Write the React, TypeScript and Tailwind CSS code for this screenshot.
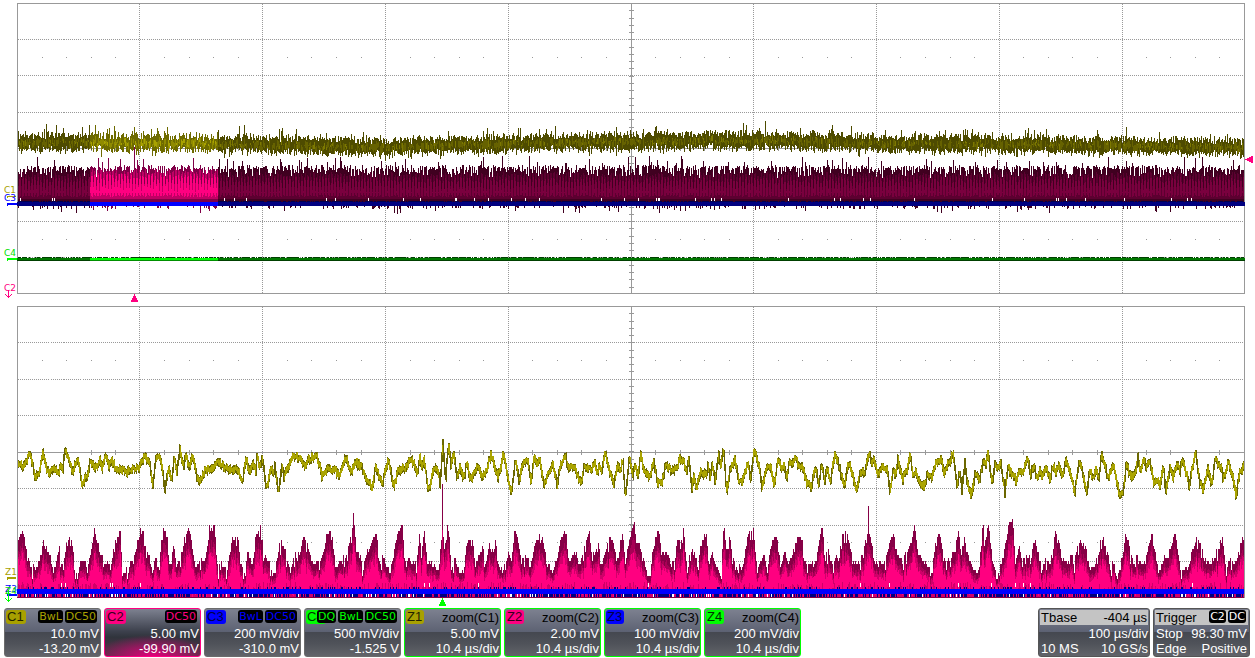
import React from "react";

type Band = { color: string; d: string };

const LEFT = 17;
const RIGHT = 1244;
const ZOOM_FROM = 90;
const ZOOM_TO = 218;
const VERTICALS = [139, 262, 385, 508, 753, 876, 999, 1122];

function makeRandom(seed: number) {
  let s = seed;
  return () => {
    s = (s * 1664525 + 1013904223) >>> 0;
    return s / 4294967296;
  };
}

/** Collects one-pixel columns by colour so each colour becomes a single path. */
class Columns {
  private parts = new Map<string, string[]>();
  add(color: string, x: number, y1: number, y2: number, w = 1) {
    const a = Math.round(y1);
    const b = Math.round(y2);
    if (b <= a) return;
    if (!this.parts.has(color)) this.parts.set(color, []);
    this.parts.get(color)!.push(`M${x} ${a}h${w}V${b}h-${w}z`);
  }
  bands(): Band[] {
    return [...this.parts].map(([color, p]) => ({ color, d: p.join("") }));
  }
}

function parse(offset: number, text: string): [number, number][] {
  return text
    .trim()
    .split(/\s+/)
    .map((p) => {
      const [x, y] = p.split(",").map(Number);
      return [offset + x / 3, 430 + y / 3];
    });
}

function sampler(points: [number, number][]) {
  let i = 0;
  return (x: number) => {
    if (x < points[i][0]) i = 0;
    while (i < points.length - 2 && points[i + 1][0] < x) i++;
    const [x0, y0] = points[i];
    const [x1, y1] = points[i + 1];
    const t = Math.max(0, Math.min(1, (x - x0) / (x1 - x0 || 1)));
    return y0 + (y1 - y0) * t;
  };
}

const Z1_POINTS = [
  ...parse(0, "52,105 75,105 90,70 97,98 107,145 120,120 130,65 140,120 150,130 165,115 175,130 185,100 188,125 195,55 205,80 218,130 232,82 247,160 262,140 270,95 290,115 300,90 305,115 318,75 327,110 335,90 348,115 380,125 415,115 425,90 437,75 450,110 458,170 468,85 478,85 487,110 495,180 507,110 515,150 523,85 531,130 540,55 550,105 560,75 568,110 578,75 592,145 605,148 615,120 628,120 640,115 653,95 665,105 680,115 700,115 715,125 728,150 738,90 750,125 760,100 768,130 770,80 780,110 788,80 800,180 812,115 820,130 825,105 835,185 845,110 853,145 865,110 875,90 882,75 898,85 915,110 925,90 939,80 950,72 966,135 984,120 1005,120 1020,135 1038,80 1053,130 1065,95 1086,110 1101,150 1116,170 1128,110"),
  ...parse(380, "0,145 8,160 25,85 42,170 55,120 75,115 90,85 105,105 113,135 119,75 127,115 133,85 145,180 155,145 168,105 175,120 181,170 188,35 197,150 206,40 213,105 223,70 231,145 240,105 250,150 262,95 270,150 285,130 295,100 305,140 318,125 333,70 345,115 355,140 370,75 380,120 394,190 406,85 418,150 425,115 443,80 452,155 463,85 472,100 480,90 492,170 505,130 518,100 532,165 542,100 558,75 565,120 580,105 603,160 613,105 630,120 645,100 652,130 658,110 665,125 674,65 682,95 695,140 702,165 713,100 722,125 728,85 737,200 748,80 758,135 765,105 775,135 782,65 790,115 808,140 822,95 833,160 845,160 858,100 870,120 890,115"),
  ...parse(670, "30,85 40,95 50,125 57,90 66,180 72,140 80,170 92,125 108,130 115,105 120,150 127,95 135,155 147,75 152,110 160,50 170,180 180,120 195,85 205,145 215,155 225,130 235,100 243,145 252,65 265,95 277,175 287,120 300,105 312,165 325,85 335,115 342,100 350,145 358,100 380,85 387,110 395,100 410,155 423,175 437,115 447,165 455,100 465,150 472,105 482,155 494,75 505,95 522,170 535,95 545,125 560,185 570,130 585,125 598,65 605,105 613,90 622,135 640,105 652,120 661,180 670,120 675,135 685,85 697,150 712,120 721,70 730,140 738,125 745,150 763,170 772,135 785,145 795,105 813,85 823,130 838,95 849,70 862,165 868,120 876,180"),
  ...parse(955, "30,95 36,145 49,200 60,135 75,145 85,90 92,110 100,60 110,160 120,105 128,120 137,95 150,185 160,110 185,155 195,120 205,125 218,90 228,130 237,105 247,145 255,115 262,145 272,110 285,145 295,105 303,130 313,100 322,140 333,90 345,120 360,185 372,100 382,120 395,185 405,125 415,140 425,115 432,150 440,65 450,105 458,145 465,130 475,105 493,195 505,190 514,95 525,135 535,140 543,125 550,75 555,120 567,90 575,115 586,95 597,160 610,150 615,165 625,105 633,185 645,110 655,145 665,105 675,120 683,90 695,135 703,170 712,115 723,70 733,150 743,180 752,145 760,115 770,160 782,85 798,115 805,145 820,95 835,145 843,195 855,130 868,100"),
];

const Z2_POINTS = [
  ...parse(0, "52,340 62,310 75,320 82,390 90,410 105,415 118,380 128,330 140,365 150,375 157,420 165,410 178,340 182,410 190,390 198,350 206,320 217,350 225,420 232,435 240,400 250,385 260,420 270,370 281,310 290,330 300,375 315,400 330,395 345,350 361,300 365,430 380,410 400,395 410,340 418,300 430,300 437,370 447,380 457,440 465,380 475,420 487,285 500,320 508,420 520,345 530,410 540,390 550,340 565,290 575,350 585,410 600,395 615,390 627,300 643,285 650,410 665,400 680,420 690,360 697,320 712,320 720,390 735,430 742,360 755,410 765,330 781,280 790,370 805,390 820,440 830,380 844,320 855,360 870,430 880,380 898,365 912,315 924,360 942,405 960,390 981,315 993,300 1005,405 1035,390 1053,315 1059,258 1068,345 1086,405 1110,345 1128,306 1136,390"),
  ...parse(380, "0,400 8,375 15,410 30,420 40,370 52,310 66,285 72,385 90,395 108,410 117,310 124,360 132,295 140,400 155,400 175,420 183,320 188,310 193,370 200,275 208,320 213,420 222,385 235,420 250,430 257,350 265,330 277,320 285,410 297,380 308,350 315,410 327,340 345,330 355,410 372,400 385,370 392,400 403,300 415,340 422,385 440,380 450,410 465,340 480,310 490,350 500,400 515,420 530,390 540,330 557,300 565,400 583,370 600,410 610,350 628,305 635,390 655,330 660,420 675,370 690,310 702,350 710,400 727,310 735,400 748,320 760,275 770,330 785,370 800,430 810,440 820,325 835,300 845,370 860,375 875,400 885,380 892,320"),
  ...parse(670, "30,355 40,285 48,400 60,370 75,375 85,420 90,340 108,310 115,400 125,370 135,400 152,450 160,285 170,370 178,310 187,390 200,410 215,410 222,385 232,310 250,305 258,390 270,400 282,370 290,435 302,340 318,320 330,400 345,370 355,400 365,380 377,330 395,320 400,400 420,400 435,410 445,345 455,285 465,370 475,365 485,410 495,380 505,400 515,310 530,300 540,360 550,400 570,400 582,340 595,300 600,320 610,390 640,400 655,350 668,305 680,370 690,385 705,375 722,340 733,285 740,350 755,385 770,400 785,430 795,340 808,310 820,390 835,395 850,370 865,300 872,380 882,320 890,370"),
  ...parse(955, "43,390 55,415 70,430 82,275 90,330 100,275 108,370 115,410 130,420 145,370 157,285 172,275 180,390 192,350 200,400 210,370 220,380 238,330 248,370 260,420 272,385 285,400 292,345 301,300 310,330 320,390 335,400 350,370 357,420 365,345 382,330 395,370 403,420 415,410 430,370 440,320 455,350 465,420 475,400 485,430 497,410 505,350 514,285 522,350 535,400 548,370 555,400 570,400 586,310 597,350 610,430 620,400 635,370 647,360 659,300 665,350 675,410 687,430 700,410 712,360 728,320 740,370 750,390 765,400 780,380 790,350 803,320 812,420 825,380 837,410 850,360 857,330 868,320"),
];

function buildAcquisition(): Band[] {
  const r = makeRandom(41);
  const c = new Columns();
  const drift = sampler([[17, 142], [90, 142], [220, 143], [300, 145], [390, 147], [460, 144], [560, 142], [700, 140], [790, 140], [880, 143], [1000, 144], [1100, 145], [1244, 147]]);
  for (let x = LEFT + 1; x < RIGHT; x++) {
    const lit = x >= ZOOM_FROM && x < ZOOM_TO;
    const mid = drift(x) + (r() - 0.5) * 3;
    const top = mid - 3 - r() * 7 - (r() > 0.92 ? 3 + r() * 6 : 0);
    const bottom = mid + 4 + r() * 7 + (r() > 0.94 ? 3 : 0);
    c.add(lit ? "#6e6b00" : "#4e4b00", x, top, bottom);
    if (r() > 0.3) c.add(lit ? "#8f8a00" : "#666200", x, mid - 5 + r() * 7, mid + r() * 7);
    if (r() > 0.65) c.add(lit ? "#a8a200" : "#7c7800", x, mid - 4 + r() * 6, mid + r() * 5);

    const ridge = r() > 0.35 ? 165 + r() * 5 : 169 + r() * 9;
    const peak = r() > 0.94 ? 156 + r() * 7 : ridge;
    c.add(lit ? "#800048" : "#400020", x, peak, 202);
    const stripe = x % 3 === 0;
    const start = (stripe ? 187 : 175) - (lit ? 3 : 0);
    c.add(lit ? "#c00064" : "#5c0030", x, start - 3 + r() * 5, 199);
    c.add(lit ? "#ff0080" : "#7a003e", x, start + 2 + r() * 6, stripe ? 193 : 195 + r() * 2);
    if (r() > 0.96) c.add("#ffffff", x, 198, 201);
    if (r() > 0.77) c.add(lit ? "#800048" : "#400020", x, 204, 207 + r() * (r() > 0.85 ? 6 : 2));
    if (r() > 0.2) c.add("#000050", x, 201, 203);
    if (r() > 0.3) c.add("#004000", x, 257, 258);
  }
  c.add("#800048", 134, 147, 175);
  c.add("#6e6b00", 134, 127, 140);
  c.add("#400020", 397, 205, 214);
  c.add("#400020", 563, 205, 213);
  return c.bands();
}

function buildZoomPink(): Band[] {
  const r = makeRandom(97);
  const c = new Columns();
  const env = sampler(Z2_POINTS);
  for (let x = LEFT + 1; x < RIGHT; x++) {
    const jitter = r() > 0.7 ? (r() - 0.3) * 18 : (r() - 0.5) * 5;
    const top = Math.min(579, Math.round((env(x) + jitter) / 3) * 3);
    const height = 597 - top;
    c.add("#860046", x, top, 598);
    c.add("#a80055", x, top + height * (0.17 + r() * 0.1), 598);
    c.add("#d0006a", x, top + height * (0.26 + r() * 0.12), 598);
    c.add("#ff0080", x, top + height * (0.33 + r() * 0.17), 582 + r() * 16);
  }
  c.add("#860046", 442, 484, 560);
  c.add("#d0006a", 442, 530, 575);
  c.add("#860046", 868, 506, 540);
  return c.bands();
}

function buildZoomBase(): Band[] {
  const r = makeRandom(12);
  const c = new Columns();
  for (let x = LEFT + 1; x < RIGHT; x++) {
    const n = r();
    if (n > 0.5) c.add("#000080", x, 594, 597);
    else if (n > 0.42) c.add("#ffffff", x, 594, 597);
    if (r() > 0.82) c.add("#000080", x, 587, 589);
    if (r() > 0.985) c.add("#ffffff", x, 583, 587);
  }
  c.add("#860046", LEFT, 597, 598, RIGHT - LEFT);
  c.add("#0000ff", LEFT, 589, 594, RIGHT - LEFT);
  return c.bands();
}

function buildZoomYellow(): Band[] {
  const r = makeRandom(5);
  const c = new Columns();
  const y = sampler(Z1_POINTS);
  let prev = y(LEFT);
  for (let x = LEFT + 1; x < RIGHT; x++) {
    const next = y(x + 1) + (r() - 0.5) * 5;
    const lo = Math.min(prev, next);
    const hi = Math.max(prev, next);
    c.add("#6b6700", x, lo - 2 - r() * 2, hi + 2 + r() * 3);
    if (hi - lo < 7) c.add("#aaa400", x, lo - 1 - r() * 2, hi + 1 + r() * 2);
    prev = next;
  }
  c.add("#6b6700", 442, 439, 462, 2);
  return c.bands();
}

function Trace({ bands }: { bands: Band[] }) {
  return (
    <>
      {bands.map((b) => (
        <path key={b.color} d={b.d} fill={b.color} />
      ))}
    </>
  );
}

function Graticule({ top, lines }: { top: number; lines: number[] }) {
  const bottom = top + 290 + (top > 300 ? 1 : 0);
  const middle = top + (top > 300 ? 146 : 145);
  const subs = Array.from({ length: 49 }, (_, i) => i + 1);
  const minor = Array.from({ length: 39 }, (_, i) => i + 1);
  return (
    <g stroke="#999999" strokeWidth="1" fill="none" transform="translate(.5 .5)">
      <rect x={LEFT} y={top} width={RIGHT - LEFT} height={bottom - top} />
      {lines.map((y) => (
        <path key={y} d={`M${LEFT} ${y}H${RIGHT}`} strokeDasharray="1 1" />
      ))}
      {VERTICALS.map((x) => (
        <path key={x} d={`M${x} ${top}V${bottom}`} strokeDasharray="1 1" />
      ))}
      <path d={`M631 ${top}V${bottom}M${LEFT} ${middle}H${RIGHT}`} />
      <path d={minor.map((i) => `M628.5 ${top + Math.round(i * 7.27)}h5`).join("")} />
      <path
        d={subs
          .filter((i) => i % 5)
          .map((i) => {
            const x = LEFT + Math.round(i * 24.54);
            return `M${x} ${middle - 2.5}v5M${x - 0.5} ${top + 54}h1M${x - 0.5} ${top + 236}h1`;
          })
          .join("")}
      />
    </g>
  );
}

function Marker({ x, y, color, children }: { x: number; y: number; color: string; children: string }) {
  return (
    <text x={x} y={y} fill={color} fontSize="9" fontFamily="DejaVu Sans, sans-serif">
      {children}
    </text>
  );
}

const acquisition = buildAcquisition();
const zoomPink = buildZoomPink();
const zoomBase = buildZoomBase();
const zoomYellow = buildZoomYellow();

function AcquisitionPlot() {
  return (
    <svg viewBox="0 0 1255 303" className="block h-auto w-full" shapeRendering="crispEdges" role="img" aria-label="Channels C1 to C4">
      <Graticule top={3} lines={[39, 75, 112, 184, 221, 257]} />
      <Trace bands={acquisition} />
      <path d="M17 202H1245V206H17z" fill="#000080" />
      <path d="M90 202H218V206H90z" fill="#0000ff" />
      <path d="M17 258H1245V261H17z" fill="#004000" />
      <path d="M17 258H1245V260H17z" fill="#007800" />
      <path d="M90 258H218V261H90z" fill="#009000" />
      <path d="M90 258H218V260H90z" fill="#00ff00" />
      <Marker x={4} y={193} color="#a8a000">C1</Marker>
      <path d="M7 196h9v1h-8v1h-1z" fill="#a8a000" />
      <Marker x={4} y={201} color="#0000ff">C3</Marker>
      <path d="M7 203h10v2h-9v1h-1z" fill="#0000ff" />
      <Marker x={4} y={256} color="#00e000">C4</Marker>
      <path d="M7 258h10v2h-9v1h-1z" fill="#00ff00" />
      <Marker x={4} y={291} color="#ff0080">C2</Marker>
      <path d="M8 290h1v6h1v-1h1v-1h1v1h-1v1h-1v1h-1v1h-1v-1h-1v-1h-1v-1h-1v-1h1v1h1v1h1z" fill="#ff0080" />
      <path d="M134 294h1v2h1v2h1v2h1v2h-7v-2h1v-2h1v-2h1z" fill="#ff0080" />
      <path d="M1245 159h2v-1h2v-1h2v-1h2v7h-2v-1h-2v-1h-2v-1h-2z" fill="#ff0080" />
    </svg>
  );
}

function ZoomPlot() {
  return (
    <svg viewBox="0 303 1255 303" className="block h-auto w-full" shapeRendering="crispEdges" role="img" aria-label="Zooms Z1 to Z4">
      <Graticule top={306} lines={[342, 379, 415, 488, 525, 561]} />
      <Trace bands={zoomPink} />
      <Trace bands={zoomBase} />
      <Trace bands={zoomYellow} />
      <Marker x={5} y={575} color="#a8a000">Z1</Marker>
      <path d="M7 577h9v2h-8v1h-1z" fill="#a8a000" />
      <Marker x={5} y={592} color="#0000ff">Z3</Marker>
      <Marker x={5} y={594} color="#00e000">Z4</Marker>
      <path d="M7 594h10v2h-10z" fill="#0000ff" />
      <path d="M8 590h1v10h1v-1h1v-1h1v1h-1v1h-1v1h-1v1h-1v-1h-1v-1h-1v-1h-1v-1h1v1h1v1h1z" fill="#00ff00" />
      <path d="M442 598h1v2h1v2h1v2h1v2h-7v-2h1v-2h1v-2h1z" fill="#00ff00" />
    </svg>
  );
}

function Tags({ items, color }: { items: string[]; color: string }) {
  return (
    <span className={`relative flex gap-0.5 pr-0.5 font-['DejaVu_Sans',sans-serif] text-[11px] leading-[13px] ${color}`}>
      {items.map((t) => (
        <span key={t} className="rounded-[3px] bg-black px-px">
          {t}
        </span>
      ))}
    </span>
  );
}

type Descriptor = {
  id: string;
  badge: string;
  border: string;
  tagColor?: string;
  tags?: string[];
  title?: string;
  rows: [string, string];
  selected?: boolean;
};

const DESCRIPTORS: Descriptor[] = [
  { id: "C1", badge: "bg-[#a8a000] text-[#222200]", border: "border-[#6c6c6c]", tagColor: "text-[#a8a000]", tags: ["BwL", "DC50"], rows: ["10.0 mV", "-13.20 mV"] },
  { id: "C2", badge: "bg-[#ff0080] text-[#33001a]", border: "border-[#ff0080]", tagColor: "text-[#ff0080]", tags: ["DC50"], rows: ["5.00 mV", "-99.90 mV"], selected: true },
  { id: "C3", badge: "bg-[#0000ff] text-[#000044]", border: "border-[#6c6c6c]", tagColor: "text-[#0000ff]", tags: ["BwL", "DC50"], rows: ["200 mV/div", "-310.0 mV"] },
  { id: "C4", badge: "bg-[#00ff00] text-[#003300]", border: "border-[#6c6c6c]", tagColor: "text-[#00ff00]", tags: ["DQ", "BwL", "DC50"], rows: ["500 mV/div", "-1.525 V"] },
  { id: "Z1", badge: "bg-[#a8a000] text-[#222200]", border: "border-[#00ff00]", title: "zoom(C1)", rows: ["5.00 mV", "10.4 µs/div"] },
  { id: "Z2", badge: "bg-[#ff0080] text-[#33001a]", border: "border-[#00ff00]", title: "zoom(C2)", rows: ["2.00 mV", "10.4 µs/div"] },
  { id: "Z3", badge: "bg-[#0000ff] text-[#000044]", border: "border-[#00ff00]", title: "zoom(C3)", rows: ["100 mV/div", "10.4 µs/div"] },
  { id: "Z4", badge: "bg-[#00ff00] text-[#003300]", border: "border-[#00ff00]", title: "zoom(C4)", rows: ["200 mV/div", "10.4 µs/div"] },
];

const BOX = "flex h-[49px] shrink-0 flex-col rounded-[3px] border p-px text-[13px] whitespace-nowrap text-white";
const SHADE = "bg-[linear-gradient(#7d8190_0%,#5d6273_48%,#454850_50%,#50535a_75%,#62646a_100%)]";
const PINK_SHADE =
  "bg-[radial-gradient(ellipse_60%_45%_at_50%_100%,#e0007a_0%,#e0007a00_100%),linear-gradient(#7d8190_0%,#3c404c_48%,#30343c_60%,#5a3048_100%)]";

function DescriptorBox({ d }: { d: Descriptor }) {
  return (
    <button type="button" className={`${BOX} w-[97px] ${d.border} ${d.selected ? PINK_SHADE : SHADE}`}>
      <span className="flex h-4 shrink-0 items-start justify-between">
        <span className={`-mr-[10px] h-[14px] shrink-0 rounded-[3px] px-px text-left leading-[14px] ${d.tags ? "w-5" : "w-[18px]"} ${d.badge}`}>
          {d.id}
        </span>
        {d.tags ? <Tags items={d.tags} color={d.tagColor ?? ""} /> : <span className="leading-4 text-black">{d.title}</span>}
      </span>
      <span className="block text-right leading-4">{d.rows[0]}</span>
      <span className="block text-right leading-[14px]">{d.rows[1]}</span>
    </button>
  );
}

export default function App() {
  return (
    <main className="w-full overflow-hidden bg-white font-['Liberation_Sans',Arial,sans-serif]">
      <AcquisitionPlot />
      <ZoomPlot />
      <footer className="flex gap-[3px] pt-0.5 pr-[5px] pl-1">
        {DESCRIPTORS.map((d) => (
          <DescriptorBox key={d.id} d={d} />
        ))}
        <button type="button" className={`${BOX} ml-auto w-[112px] border-[#555555] ${SHADE}`}>
          <span className="flex h-[15px] justify-between bg-[#c4c4c4] px-px leading-[15px] text-black">
            <span>Tbase</span>
            <span>-404 µs</span>
          </span>
          <span className="block pt-px text-right leading-4">100 µs/div</span>
          <span className="flex justify-between pl-px leading-[14px]">
            <span>10 MS</span>
            <span>10 GS/s</span>
          </span>
        </button>
        <button type="button" className={`${BOX} w-[97px] border-[#555555] ${SHADE}`}>
          <span className="flex h-[15px] items-start justify-between bg-[#c4c4c4] pl-px leading-[15px] text-black">
            <span>Trigger</span>
            <Tags items={["C2", "DC"]} color="text-white" />
          </span>
          <span className="flex justify-between px-px pt-px leading-4">
            <span>Stop</span>
            <span>98.30 mV</span>
          </span>
          <span className="flex justify-between px-px leading-[14px]">
            <span>Edge</span>
            <span>Positive</span>
          </span>
        </button>
      </footer>
    </main>
  );
}
